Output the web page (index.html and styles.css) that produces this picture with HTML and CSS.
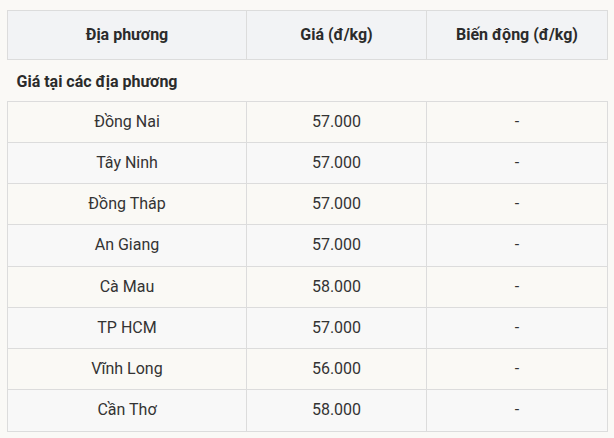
FILE: index.html
```html
<!DOCTYPE html>
<html lang="vi">
<head>
<meta charset="utf-8">
<title>Giá tại các địa phương</title>
<link rel="stylesheet" href="styles.css">
</head>
<body>
<table class="price-table">
  <colgroup>
    <col class="col-place">
    <col class="col-price">
    <col class="col-change">
  </colgroup>
  <thead>
    <tr class="head-row">
      <th>Địa phương</th>
      <th>Giá (đ/kg)</th>
      <th>Biến động (đ/kg)</th>
    </tr>
  </thead>
  <tbody>
    <tr class="section-row"><td colspan="3">Giá tại các địa phương</td></tr>
    <tr class="row odd"><td>Đồng Nai</td><td>57.000</td><td>-</td></tr>
    <tr class="row even"><td>Tây Ninh</td><td>57.000</td><td>-</td></tr>
    <tr class="row odd"><td>Đồng Tháp</td><td>57.000</td><td>-</td></tr>
    <tr class="row even"><td>An Giang</td><td>57.000</td><td>-</td></tr>
    <tr class="row odd"><td>Cà Mau</td><td>58.000</td><td>-</td></tr>
    <tr class="row even"><td>TP HCM</td><td>57.000</td><td>-</td></tr>
    <tr class="row odd"><td>Vĩnh Long</td><td>56.000</td><td>-</td></tr>
    <tr class="row even"><td>Cần Thơ</td><td>58.000</td><td>-</td></tr>
  </tbody>
</table>
</body>
</html>
```

FILE: styles.css
```css
html, body {
  margin: 0;
  background: #faf9f6;
}
body {
  padding: 10px 7px;
  font-family: Roboto, "Liberation Sans", sans-serif;
  color: #333;
}
.price-table {
  border-collapse: collapse;
  table-layout: fixed;
  width: 600px;
  font-size: 16px;
}
.col-place { width: 239px; }
.col-price { width: 180px; }
.col-change { width: 181px; }

.head-row th {
  background: #f2f3f5;
  border: 1px solid #dcdcdc;
  padding: 14px 8px;
  line-height: 20px;
  font-weight: 700;
  color: #2b2b2b;
  text-align: center;
}
.section-row td {
  border: none;
  padding: 12px 9px 8px;
  line-height: 20.5px;
  font-weight: 700;
  color: #2b2b2b;
  text-align: left;
}
.row td {
  border: 1px solid #dcdcdc;
  padding: 10px 8px;
  line-height: 20.25px;
  text-align: center;
  color: #333;
}
.row.odd td { background: #faf9f5; }
.row.even td { background: #f8f8f8; }
```
